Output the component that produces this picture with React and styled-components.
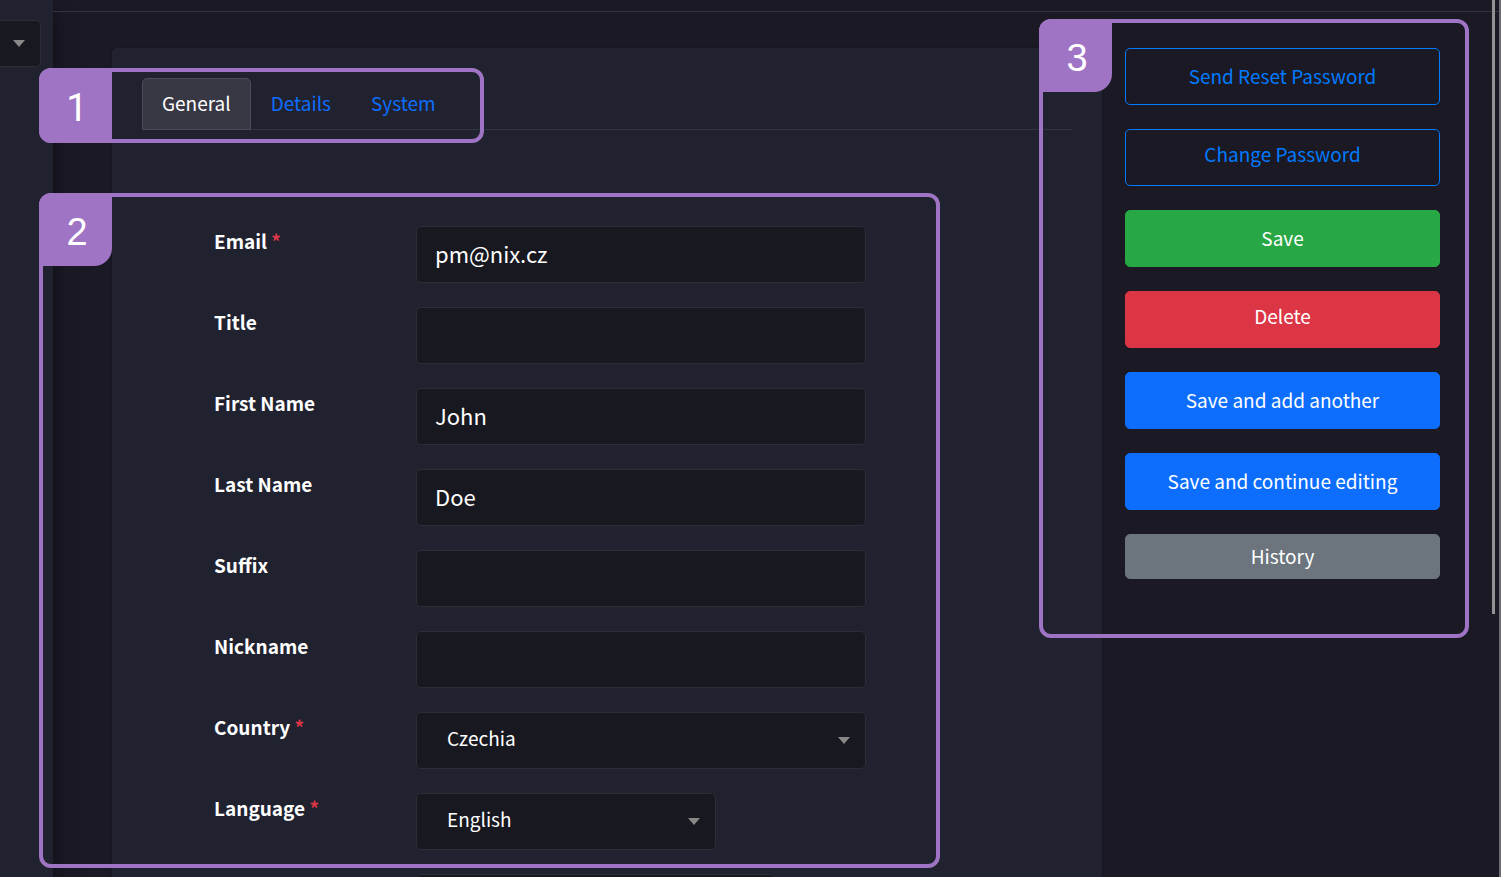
import React from "react";
import styled, { createGlobalStyle, css } from "styled-components";

const color = {
  page: "#1b1924",
  panel: "#212230",
  field: "#181820",
  line: "#34343e",
  fieldLine: "#2d2d36",
  link: "#0d6efd",
  outline: "#007bff",
  required: "#dc3545",
  callout: "#a074c4",
};

const GlobalStyle = createGlobalStyle`
  *, *::before, *::after { box-sizing: border-box; }
  body {
    margin: 0;
    background: ${color.page};
    color: #fff;
    font: 19px/30px "Noto Sans CJK SC", "Open Sans", sans-serif;
  }
`;

const Page = styled.div`
  position: relative;
  display: flex;
  height: 100vh;
  overflow: hidden;
`;

const Sidebar = styled.aside`
  flex: 0 0 53px;
  padding-top: 20px;
  background: ${color.panel};
  box-shadow: 0 14px 28px rgba(0, 0, 0, 0.25), 0 10px 10px rgba(0, 0, 0, 0.22);
`;

const Content = styled.div`
  flex: 1;
  min-width: 0;
`;

const TopBar = styled.header`
  height: 12px;
  border-bottom: 1px solid ${color.line};
`;

const Main = styled.main`
  display: flex;
  align-items: flex-start;
  gap: 23px;
  padding: 36px 61px 0 59px;
`;

const Card = styled.section`
  flex: 1;
  min-width: 0;
  min-height: 100vh;
  padding: 30px;
  border-radius: 5px;
  background: ${color.panel};
  box-shadow: 0 0 1px rgba(0, 0, 0, 0.13), 0 1px 3px rgba(0, 0, 0, 0.2);
`;

const Tabs = styled.nav`
  position: relative;
  display: flex;
  height: 52px;
  margin-bottom: 96px;
  border-bottom: 1px solid ${color.line};
`;

const Tab = styled.a`
  height: 52px;
  padding: 9px 19px;
  border: 1px solid transparent;
  border-radius: 5px 5px 0 0;
  color: ${color.link};
  text-decoration: none;

  ${(p) =>
    p.$active &&
    css`
      border-color: #4b4c57;
      background: #373844;
      color: #fff;
    `}
`;

const Form = styled.form`
  width: fit-content;
  margin-left: 72px;
`;

const FieldGroup = styled.div`
  position: relative;
  display: grid;
  gap: 24px;
  margin-bottom: 24px;
`;

const Row = styled.div`
  display: grid;
  grid-template-columns: 202px 450px;
  align-items: start;
`;

const Label = styled.label`
  font-weight: 700;
`;

const Required = styled.span`
  color: ${color.required};
`;

const fieldLook = css`
  height: 57px;
  border: 1px solid ${color.fieldLine};
  border-radius: 5px;
  background: ${color.field};
  color: #fff;
  font-family: inherit;
`;

const TextInput = styled.input`
  ${fieldLook}
  width: ${(p) => p.$width || "100%"};
  padding: 0 18px 4px;
  font-size: 22px;
`;

const SelectBox = styled.div`
  position: relative;
  width: ${(p) => p.$width || "100%"};
`;

const Select = styled.select`
  ${fieldLook}
  display: block;
  width: 100%;
  padding: 0 30px 6px;
  appearance: none;
  font-size: 19px;
`;

const ScopeSelect = styled(Select)`
  height: 47px;
  padding: 0;
  border-left: 0;
  border-radius: 0 5px 5px 0;
`;

const Arrow = styled.svg`
  position: absolute;
  top: 50%;
  right: 16px;
  width: 12px;
  height: 7px;
  margin-top: -4px;
  fill: #888;
  pointer-events: none;
`;

const Actions = styled.aside`
  position: relative;
  display: flex;
  flex: 0 0 315px;
  flex-direction: column;
  gap: 24px;
`;

const actionLook = css`
  height: 57px;
  padding: 0 0 2px;
  border: 1px solid ${(p) => p.$fill};
  border-radius: 5px;
  background: ${(p) => p.$fill};
  color: #fff;
  font: inherit;
  text-align: center;
  text-decoration: none;

  ${(p) =>
    p.$outline &&
    css`
      border-color: ${color.outline};
      background: transparent;
      color: ${color.outline};
    `}
`;

const ActionButton = styled.button`
  ${actionLook}
`;

const ActionLink = styled.a`
  ${actionLook}
  height: ${(p) => (p.$compact ? "45px" : "57px")};
  padding-top: ${(p) => (p.$compact ? "6px" : "9px")};
`;

const Callout = styled.div`
  position: absolute;
  z-index: 2;
  border: 4px solid ${color.callout};
  border-radius: 12px;
  pointer-events: none;
`;

const TabsCallout = styled(Callout)`
  top: -10px;
  left: -103px;
  width: 445px;
  height: 75px;
`;

const FormCallout = styled(Callout)`
  top: -33px;
  right: -74px;
  bottom: -18px;
  left: -175px;
`;

const ActionsCallout = styled(Callout)`
  top: -29px;
  right: -29px;
  bottom: -59px;
  left: -86px;
`;

const Badge = styled.span`
  display: flex;
  align-items: center;
  justify-content: center;
  width: 73px;
  height: 73px;
  margin: -4px;
  padding: 4px 0 0 3px;
  border-radius: 12px 0 18px 0;
  background: ${color.callout};
  font: 38px/44px "Liberation Sans", Arial, sans-serif;
`;

const TallBadge = styled(Badge)`
  height: 75px;
  border-radius: 12px 0 0 12px;
  font-family: Roboto, sans-serif;
`;

const ScrollThumb = styled.div`
  position: absolute;
  top: 0;
  right: 6px;
  width: 3px;
  height: 70%;
  background: #929292;
`;

const WindowEdge = styled.div`
  position: absolute;
  top: 0;
  right: 0;
  bottom: 0;
  width: 2px;
  background: #6b6b70;
`;

const fields = [
  { id: "email", label: "Email", value: "pm@nix.cz", required: true },
  { id: "title", label: "Title" },
  { id: "first-name", label: "First Name", value: "John" },
  { id: "last-name", label: "Last Name", value: "Doe" },
  { id: "suffix", label: "Suffix" },
  { id: "nickname", label: "Nickname" },
  { id: "country", label: "Country", options: ["Czechia"], required: true },
  { id: "language", label: "Language", options: ["English"], required: true, width: "300px" },
];

function DropDown({ as: Control = Select, width, options, ...rest }) {
  return (
    <SelectBox $width={width}>
      <Control {...rest}>
        {options.map((o) => (
          <option key={o}>{o}</option>
        ))}
      </Control>
      <Arrow viewBox="0 0 12 7" aria-hidden="true">
        <path d="M0 0h12L6 7z" />
      </Arrow>
    </SelectBox>
  );
}

function FieldRow({ id, label, value, options, required, width }) {
  return (
    <Row>
      <Label htmlFor={id}>
        {label} {required && <Required>*</Required>}
      </Label>
      {options ? (
        <DropDown id={id} options={options} width={width} />
      ) : (
        <TextInput id={id} defaultValue={value} />
      )}
    </Row>
  );
}

export default function App() {
  return (
    <Page>
      <GlobalStyle />
      <Sidebar>
        <DropDown as={ScopeSelect} width="41px" options={[""]} aria-label="Scope" />
      </Sidebar>
      <Content>
        <TopBar />
        <Main>
          <Card>
            <Tabs>
              <Tab href="#general" $active>General</Tab>
              <Tab href="#details">Details</Tab>
              <Tab href="#system">System</Tab>
              <TabsCallout>
                <TallBadge>1</TallBadge>
              </TabsCallout>
            </Tabs>
            <Form>
              <FieldGroup>
                {fields.map((f) => (
                  <FieldRow key={f.id} {...f} />
                ))}
                <FormCallout>
                  <Badge>2</Badge>
                </FormCallout>
              </FieldGroup>
              <Row>
                <span />
                <TextInput $width="358px" aria-label="Time zone" />
              </Row>
            </Form>
          </Card>
          <Actions>
            <ActionButton $outline>Send Reset Password</ActionButton>
            <ActionLink href="#password" $outline>Change Password</ActionLink>
            <ActionButton $fill="#28a745">Save</ActionButton>
            <ActionLink href="#delete" $fill="#dc3545">Delete</ActionLink>
            <ActionButton $fill={color.link}>Save and add another</ActionButton>
            <ActionButton $fill={color.link}>Save and continue editing</ActionButton>
            <ActionLink href="#history" $fill="#6c757d" $compact>History</ActionLink>
            <ActionsCallout>
              <Badge>3</Badge>
            </ActionsCallout>
          </Actions>
        </Main>
      </Content>
      <ScrollThumb />
      <WindowEdge />
    </Page>
  );
}
